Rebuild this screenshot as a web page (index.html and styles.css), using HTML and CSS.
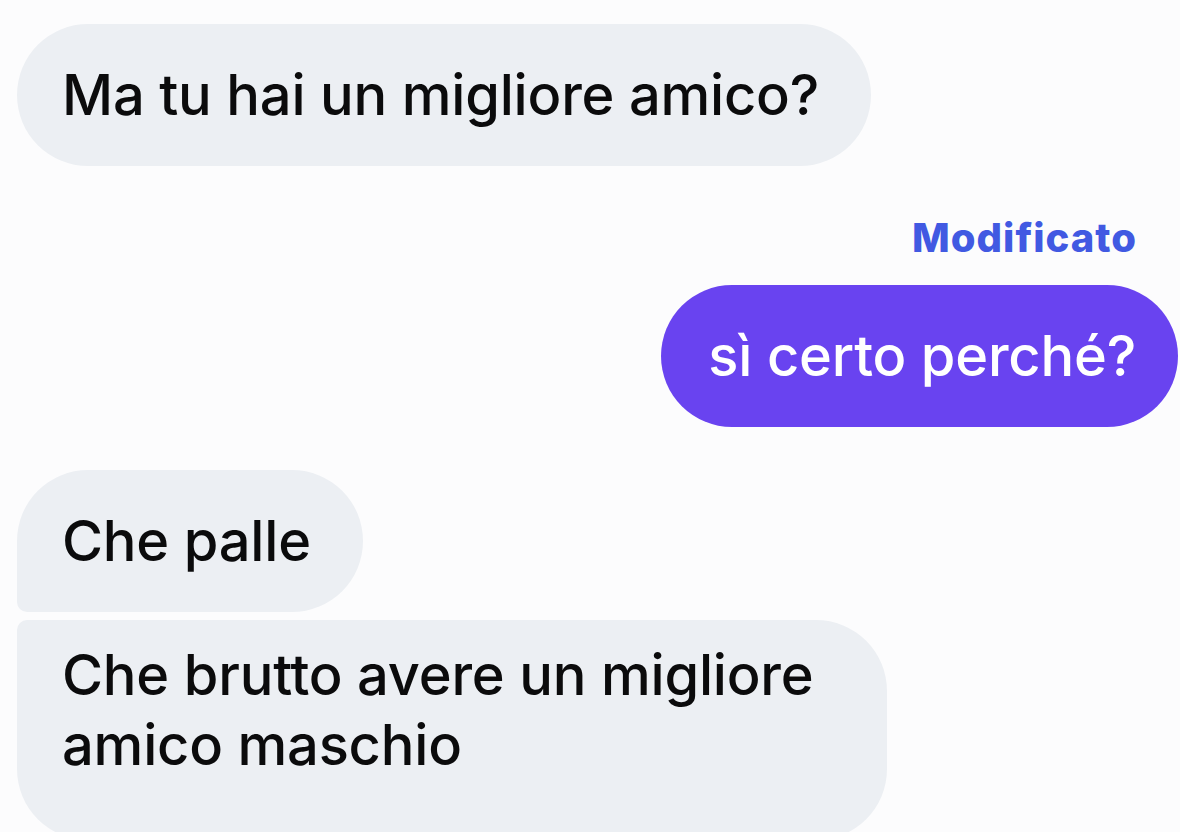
FILE: index.html
```html
<!DOCTYPE html>
<html lang="it">
<head>
<meta charset="utf-8">
<link rel="stylesheet" href="styles.css">
</head>
<body>
<div class="chat">
  <div class="row left">
    <div class="bubble in single">Ma tu hai un migliore amico?</div>
  </div>
  <div class="row right">
    <div class="edited">Modificato</div>
    <div class="bubble out single">sì certo perché?</div>
  </div>
  <div class="row left group">
    <div class="bubble in first">Che palle</div>
    <div class="bubble in last multi">Che brutto avere un migliore<br>amico maschio</div>
  </div>
</div>
</body>
</html>
```
FILE: styles.css
```css
html, body {
  margin: 0;
  padding: 0;
  background: #fcfcfd;
  height: 832px;
  overflow: hidden;
}
.chat {
  display: flex;
  flex-direction: column;
  padding: 24px 2px 0 17px;
  font-family: "Inter", "Liberation Sans", sans-serif;
  font-weight: 550;
  color: #0b0b0c;
}
.row {
  display: flex;
  flex-direction: column;
}
.row.left { align-items: flex-start; }
.row.right { align-items: flex-end; margin-top: 52px; }
.row.group { margin-top: 43px; gap: 8px; }
.bubble {
  box-sizing: border-box;
  font-size: 56px;
  letter-spacing: -0.2px;
  line-height: 70px;
  padding: 36px 52px 36px 45px;
  border-radius: 71px;
}
.bubble.in { background: #eceff3; }
.bubble.out { background: #6943f0; color: #ffffff; padding: 36px 42px 36px 47px; font-weight: 500; }
.bubble.first { border-bottom-left-radius: 10px; }
.bubble.last { border-top-left-radius: 10px; }
.bubble.multi { padding: 20px 74px 60px 45px; }
.edited {
  color: #4159e2;
  font-weight: 800;
  font-size: 40px;
  letter-spacing: 1px;
  margin-right: 41px;
  margin-bottom: 27px;
  line-height: 40px;
}
```
